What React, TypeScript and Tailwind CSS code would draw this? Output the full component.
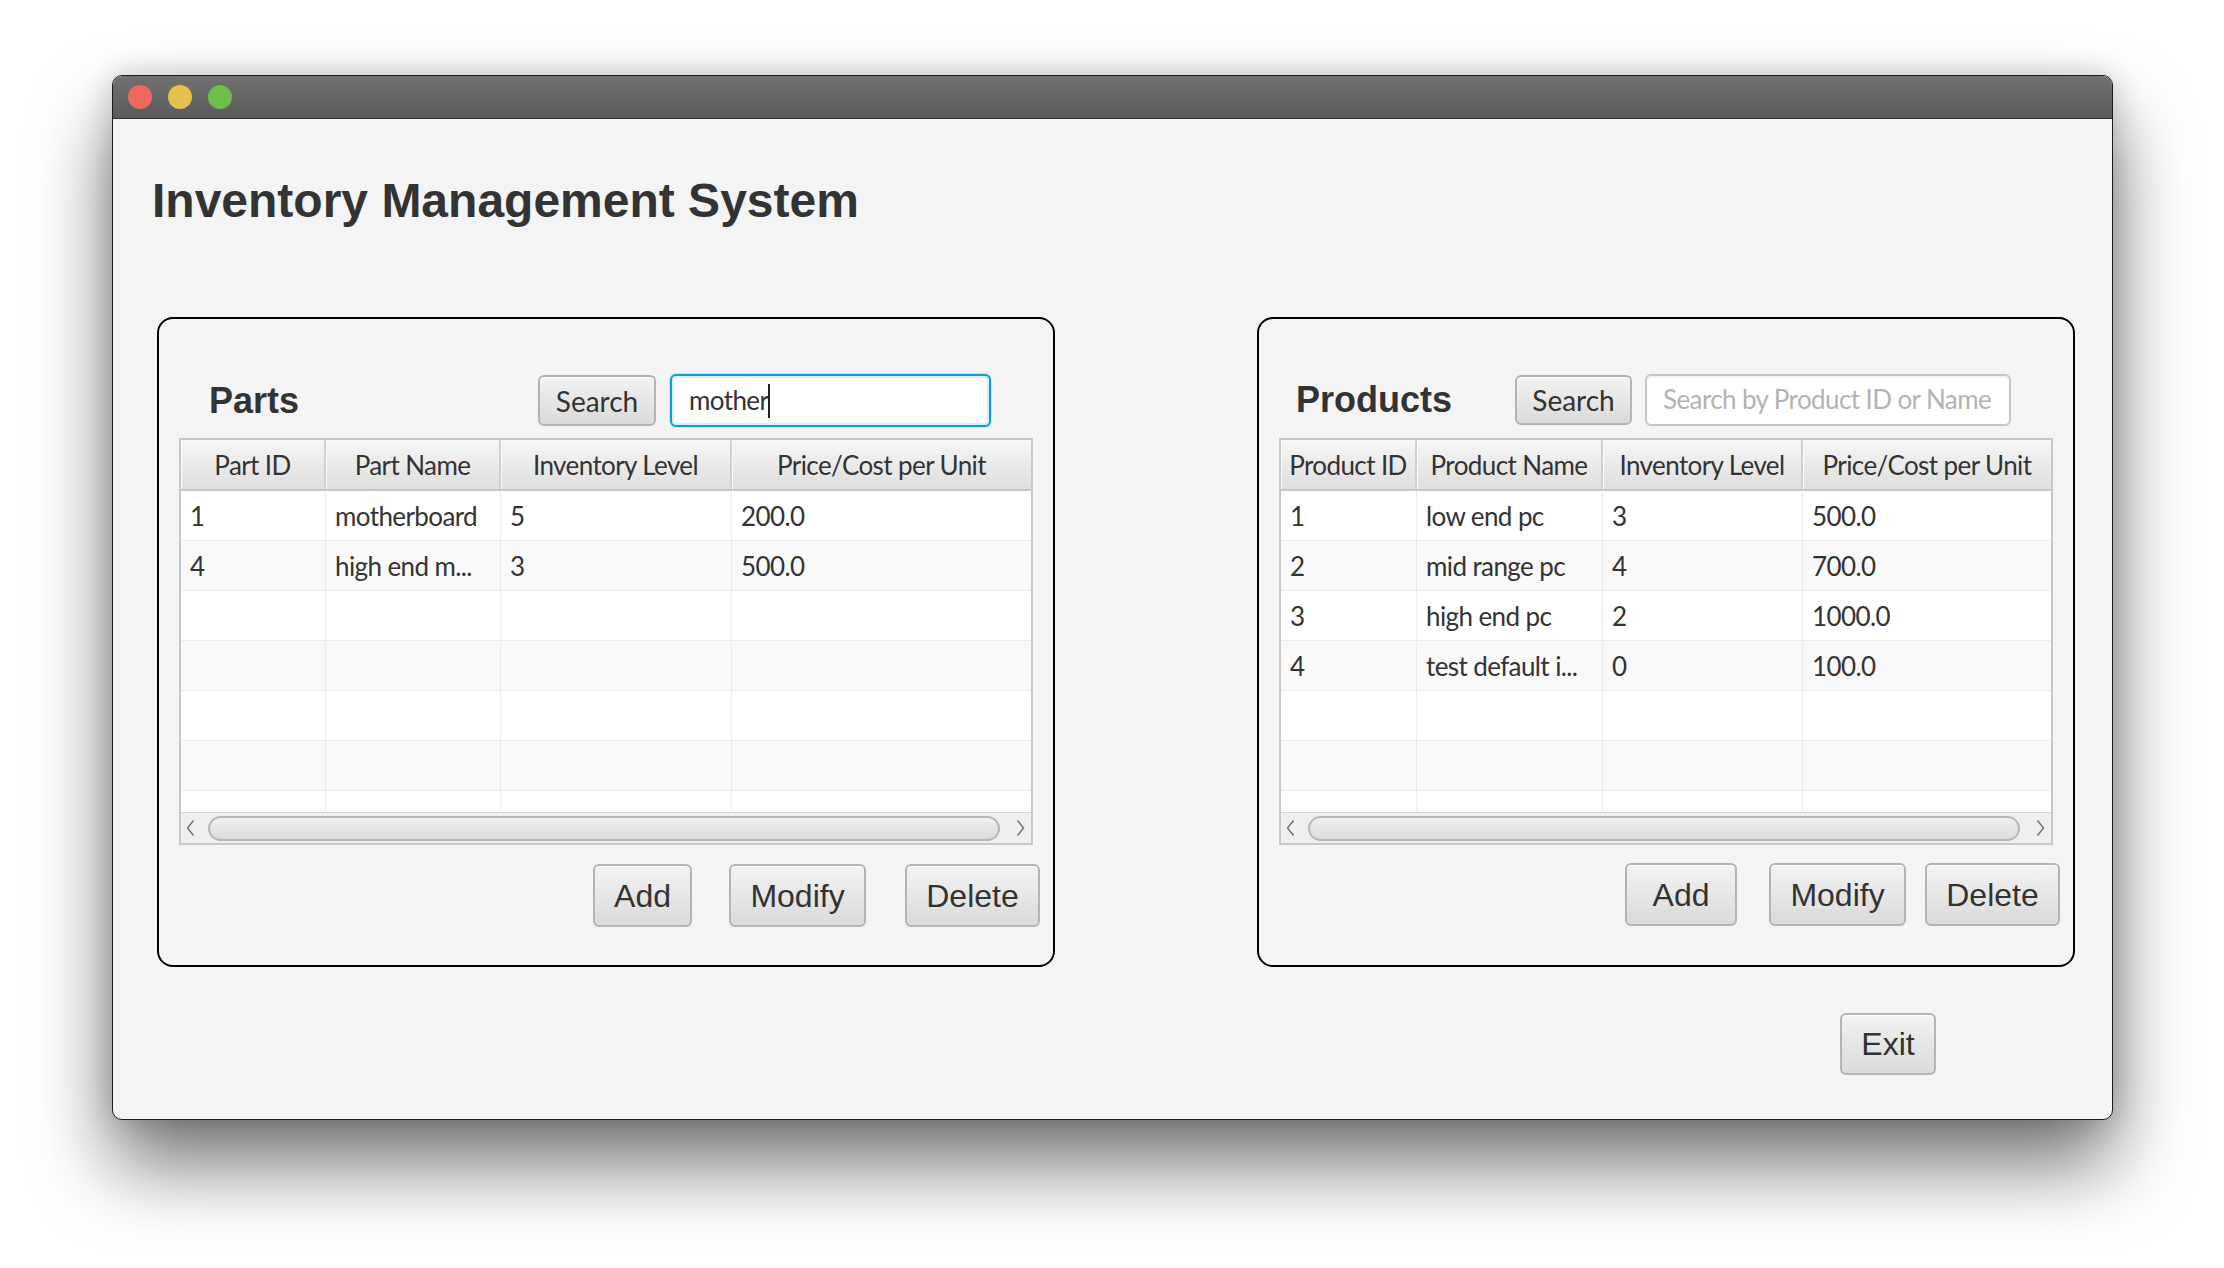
import React from "react";

const lato = "font-['Lato',sans-serif]";
const arial = "font-['Liberation_Sans',Arial,sans-serif]";

const btn =
  "flex items-center justify-center rounded-[6px] border-2 border-[#b4b4b4] bg-linear-to-b from-[#f3f3f3] to-[#dadada] shadow-[inset_0_1px_0_#ffffff] text-[#333333]";

function Chevron({ dir }: { dir: "l" | "r" }) {
  return (
    <svg width="9" height="18" viewBox="0 0 9 18">
      <polyline
        points={dir === "l" ? "7.5,1.5 1.5,9 7.5,16.5" : "1.5,1.5 7.5,9 1.5,16.5"}
        fill="none"
        stroke="#6f6f6f"
        strokeWidth="1.4"
      />
    </svg>
  );
}

function Table({
  cols,
  headers,
  rows,
}: {
  cols: string;
  headers: string[];
  rows: string[][];
}) {
  const bodyRows = Array.from({ length: 7 }).map((_, i) => rows[i] || ["", "", "", ""]);
  return (
    <div className={`mt-[11px] mx-[20px] h-[407px] border-2 border-[#c8c8c8] bg-white flex flex-col ${lato}`}>
      <div className={`grid ${cols} h-[51px] border-b-2 border-[#c8c8c8] shrink-0`}>
        {headers.map((h, i) => (
          <div
            key={i}
            className={`flex items-center justify-center pt-[2px] bg-linear-to-b from-[#f6f6f6] to-[#dfdfdf] shadow-[inset_1px_1px_0_#fbfbfb] text-[26px] tracking-[-0.6px] text-[#333333] whitespace-nowrap ${
              i < headers.length - 1 ? "border-r-2 border-[#d0d0d0]" : ""
            }`}
          >
            {h}
          </div>
        ))}
      </div>
      <div className="h-[321px] overflow-hidden shrink-0">
        {bodyRows.map((r, ri) => (
          <div
            key={ri}
            className={`grid ${cols} h-[50px] border-b border-[#ebebeb] ${ri % 2 === 0 ? "bg-white" : "bg-[#f9f9f9]"}`}
          >
            {r.map((c, ci) => (
              <div
                key={ci}
                className={`flex items-center pl-[9px] pt-[2px] text-[26px] tracking-[-0.6px] text-[#333333] whitespace-nowrap overflow-hidden ${
                  ci < r.length - 1 ? "border-r border-[#ebebeb]" : ""
                }`}
              >
                {c}
              </div>
            ))}
          </div>
        ))}
      </div>
      <div className="flex-1 flex items-center bg-[#efefef] border-t border-[#d6d6d6]">
        <div className="w-[27px] flex justify-start pl-[5px]">
          <Chevron dir="l" />
        </div>
        <div className="flex-1 h-[25px] rounded-full border-2 border-[#b8b8b8] bg-linear-to-b from-[#efefef] to-[#dcdcdc]" />
        <div className="w-[31px] flex justify-start pl-[16px]">
          <Chevron dir="r" />
        </div>
      </div>
    </div>
  );
}

export default function App() {
  return (
    <div className="min-h-screen w-full bg-white pt-[75px] pl-[112px]">
      <div className="w-[2001px] h-[1045px] rounded-[10px] border border-[#1c1c1c] overflow-hidden bg-[#f4f4f4] shadow-[0_45px_80px_rgba(0,0,0,0.55),0_0_30px_rgba(0,0,0,0.18)] flex flex-col">
        {/* title bar */}
        <div className="h-[43px] shrink-0 bg-linear-to-b from-[#707070] to-[#5c5c5c] border-b border-[#2e2e2e] flex items-center pl-[15px] gap-[16px]">
          <div className="w-[24px] h-[24px] rounded-full bg-[#ee6a5e]" />
          <div className="w-[24px] h-[24px] rounded-full bg-[#e4c14d]" />
          <div className="w-[24px] h-[24px] rounded-full bg-[#6cc04a]" />
        </div>

        {/* content */}
        <div className="flex-1 flex flex-col">
          <div className={`mt-[58px] pl-[39px] h-[48px] leading-none text-[48px] font-bold text-[#333333] ${arial}`}>
            Inventory Management System
          </div>

          <div className="mt-[92px] pl-[44px] flex">
            {/* Parts panel */}
            <div className="w-[898px] h-[650px] border-2 border-black rounded-[16px] flex flex-col">
              <div className="mt-[55px] h-[53px] flex items-center pl-[50px] pr-[62px]">
                <div className={`text-[36px] leading-none font-bold text-[#333333] ${arial}`}>Parts</div>
                <div className="flex-1" />
                <div className={`${btn} w-[118px] h-[51px] text-[28px] ${lato}`}>Search</div>
                <div className="ml-[14px] w-[321px] h-[53px] rounded-[6px] border-2 border-[#0b9ed6] bg-white shadow-[0_0_0_1px_#c5e6f4,inset_0_0_0_2px_#d8eef8] flex items-center pl-[17px]">
                  <span className={`text-[26px] tracking-[-0.6px] text-[#333333] ${lato}`}>mother</span>
                  <span className="w-[2px] h-[34px] bg-[#222222]" />
                </div>
              </div>
              <Table
                cols="grid-cols-[145px_175px_231px_1fr]"
                headers={["Part ID", "Part Name", "Inventory Level", "Price/Cost per Unit"]}
                rows={[
                  ["1", "motherboard", "5", "200.0"],
                  ["4", "high end m...", "3", "500.0"],
                ]}
              />
              <div className={`mt-[19px] h-[63px] flex justify-end pr-[13px] text-[32px] ${arial}`}>
                <div className={`${btn} w-[99px]`}>Add</div>
                <div className={`${btn} w-[137px] ml-[37px]`}>Modify</div>
                <div className={`${btn} w-[135px] ml-[39px]`}>Delete</div>
              </div>
            </div>

            {/* Products panel */}
            <div className="ml-[202px] w-[818px] h-[650px] border-2 border-black rounded-[16px] flex flex-col">
              <div className="mt-[54px] h-[53px] flex items-center pl-[37px] pr-[62px]">
                <div className={`text-[36px] leading-none font-bold text-[#333333] ${arial}`}>Products</div>
                <div className="flex-1" />
                <div className={`${btn} w-[117px] h-[50px] text-[28px] ${lato}`}>Search</div>
                <div className="ml-[13px] w-[366px] h-[52px] rounded-[6px] border-2 border-[#c6c6c6] bg-white shadow-[inset_0_2px_2px_rgba(0,0,0,0.05)] flex items-center pl-[16px]">
                  <span className={`text-[26px] tracking-[-0.6px] text-[#b3b3b3] whitespace-nowrap ${lato}`}>
                    Search by Product ID or Name
                  </span>
                </div>
              </div>
              <div className="mt-[1px]">
                <Table
                  cols="grid-cols-[136px_186px_200px_1fr]"
                  headers={["Product ID", "Product Name", "Inventory Level", "Price/Cost per Unit"]}
                  rows={[
                    ["1", "low end pc", "3", "500.0"],
                    ["2", "mid range pc", "4", "700.0"],
                    ["3", "high end pc", "2", "1000.0"],
                    ["4", "test default i...", "0", "100.0"],
                  ]}
                />
              </div>
              <div className={`mt-[18px] h-[63px] flex justify-end pr-[13px] text-[32px] ${arial}`}>
                <div className={`${btn} w-[112px]`}>Add</div>
                <div className={`${btn} w-[137px] ml-[32px]`}>Modify</div>
                <div className={`${btn} w-[135px] ml-[19px]`}>Delete</div>
              </div>
            </div>
          </div>

          <div className="mt-[46px] flex justify-end pr-[176px]">
            <div className={`${btn} w-[96px] h-[62px] text-[32px] ${arial}`}>Exit</div>
          </div>
        </div>
      </div>
    </div>
  );
}
